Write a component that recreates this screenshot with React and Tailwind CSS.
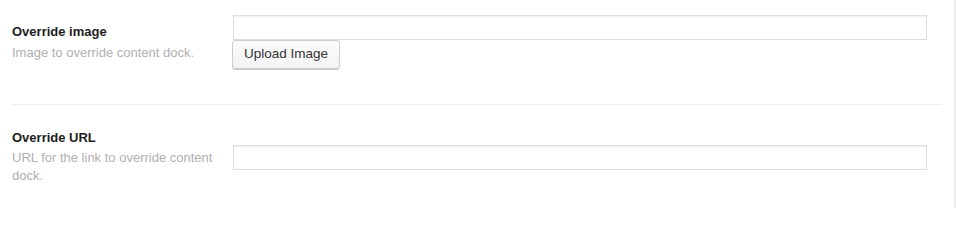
import React from "react";

export default function App() {
  return (
    <div className="w-[956px] h-[208px] bg-white flex font-['Liberation_Sans',Arial,sans-serif] overflow-hidden">
      <div className="w-[954px] px-[12px]">
        <div className="flex items-center pt-[15px] pb-[35px]">
          <div className="w-[221px] shrink-0 pr-[12px]">
            <div className="text-[13px] leading-[18px] font-bold text-[#1e1e1e]">Override image</div>
            <div className="mt-[3px] text-[13px] leading-[18px] text-[#b0b0b0]">Image to override content dock.</div>
          </div>
          <div className="flex flex-col items-start">
            <input
              type="text"
              className="w-[694px] h-[25px] border border-[#dddddd] bg-white shadow-[inset_0_1px_2px_rgba(0,0,0,0.07)] outline-none"
            />
            <button className="-ml-px h-[29px] px-[11px] text-[13.5px] text-[#333] bg-gradient-to-b from-[#fcfcfc] to-[#f3f3f3] border border-[#cccccc] rounded-[3px] shadow-[0_1px_0_#cccccc]">
              Upload Image
            </button>
          </div>
        </div>
        <div className="h-px bg-[#eeeeee]" />
        <div className="flex items-center pt-[24px]">
          <div className="w-[221px] shrink-0 pr-[12px]">
            <div className="text-[13px] leading-[18px] font-bold text-[#1e1e1e]">Override URL</div>
            <div className="mt-[2px] text-[13px] leading-[18px] text-[#b0b0b0]">URL for the link to override content dock.</div>
          </div>
          <div className="flex flex-col items-start">
            <input
              type="text"
              className="w-[694px] h-[25px] border border-[#dddddd] bg-white shadow-[inset_0_1px_2px_rgba(0,0,0,0.07)] outline-none"
            />
          </div>
        </div>
      </div>
      <div className="w-[2px] h-full bg-[#eeeeee]" />
    </div>
  );
}
